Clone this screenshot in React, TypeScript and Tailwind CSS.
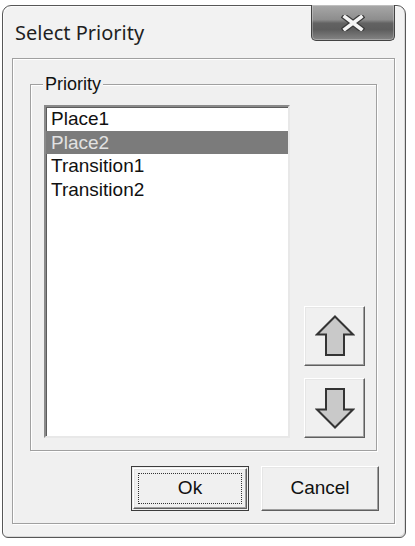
import { useState } from 'react';

const ITEMS = ['Place1', 'Place2', 'Transition1', 'Transition2'];

// Classic raised 3D bevel used by the push buttons
const raised =
  'border-t border-l border-t-white border-l-white border-b border-r border-b-[#5f5f5f] border-r-[#5f5f5f] shadow-[inset_-1px_-1px_0_#a0a0a0,inset_1px_1px_0_#e6e6e6]';

function CloseGlyph() {
  return (
    <svg width="24" height="16" viewBox="0 0 24 16">
      <path d="M4 2 L20 14 M20 2 L4 14" stroke="#3a3a3a" strokeWidth="6" strokeLinecap="square" fill="none" />
      <path d="M4 2 L20 14 M20 2 L4 14" stroke="#f4f4f4" strokeWidth="3.6" strokeLinecap="square" fill="none" />
    </svg>
  );
}

function Arrow({ down }: { down?: boolean }) {
  return (
    <svg width="40" height="42" viewBox="0 0 40 42" className={down ? 'rotate-180' : ''}>
      <polygon
        points="20,1.5 38,19.5 29,19.5 29,40 11,40 11,19.5 2,19.5"
        fill="#c9c9c9"
        stroke="#343434"
        strokeWidth="2"
        strokeLinejoin="miter"
      />
    </svg>
  );
}

export default function App() {
  const [selected, setSelected] = useState(1);

  return (
    <div className="w-[415px] h-[546px] bg-white pt-[5px] pl-[2px] font-['Liberation_Sans',Arial,sans-serif]">
      {/* Dialog window */}
      <div className="w-[404px] h-[533px] flex flex-col border border-[#575757] rounded-t-[9px] rounded-b-[6px] bg-[#f2f2f2] pl-[9px] pr-[10px] pb-[13px] shadow-[inset_1px_1px_0_#fbfbfb,inset_-1px_-1px_0_#d8d8d8]">
        {/* Title bar */}
        <div className="h-[52px] flex items-start justify-between">
          <span className="mt-[12px] ml-[3px] text-[20px] text-[#1f1f1f] font-['Noto_Sans',sans-serif]">
            Select Priority
          </span>
          <button className="-mt-[1px] w-[84px] h-[36px] flex items-center justify-center border border-[#434343] border-t-0 rounded-b-[5px] bg-[linear-gradient(to_bottom,#a8a8a8_0%,#8d8d8d_42%,#626262_52%,#5d5d5d_70%,#858585_100%)] shadow-[inset_0_0_0_1px_rgba(255,255,255,0.28)]">
            <CloseGlyph />
          </button>
        </div>

        {/* Client frame */}
        <div className="flex-1 flex flex-col border border-[#a0a0a0] shadow-[inset_1px_1px_0_#fff,1px_1px_0_#fff] bg-[#f0f0f0] px-[17px] pt-[25px] pb-[12px]">
          {/* Priority group box */}
          <div className="relative h-[367px] flex border border-[#a0a0a0] shadow-[inset_1px_1px_0_#fff,1px_1px_0_#fff] pl-[13px] pr-[11px] pt-[20px] pb-[12px] gap-[14px]">
            <span className="absolute -top-[12px] left-[12px] bg-[#f0f0f0] px-[2px] text-[18px] leading-[22px] text-[#111]">
              Priority
            </span>

            {/* List box */}
            <div className="w-[246px] h-[333px] bg-white border-t-2 border-l-2 border-b-2 border-r-2 border-t-[#8a8a8a] border-l-[#8a8a8a] border-b-[#e8e8e8] border-r-[#e8e8e8] shadow-[inset_1px_1px_0_#5c5c5c]">
              {ITEMS.map((item, i) => (
                <div
                  key={item}
                  onClick={() => setSelected(i)}
                  className={`h-[23.5px] leading-[23.5px] pl-[5px] text-[19px] ${
                    i === selected ? 'bg-[#7b7b7b] text-[#e2e2e2]' : 'text-[#111]'
                  }`}
                >
                  {item}
                </div>
              ))}
            </div>

            {/* Move up / down */}
            <div className="flex flex-col justify-end gap-[12px]">
              <button className={`w-[61px] h-[60px] flex items-center justify-center bg-[#f0f0f0] ${raised}`}>
                <Arrow />
              </button>
              <button className={`w-[61px] h-[60px] flex items-center justify-center bg-[#f0f0f0] ${raised}`}>
                <Arrow down />
              </button>
            </div>
          </div>

          {/* Dialog buttons */}
          <div className="mt-[15px] -mr-[2px] flex justify-end gap-[12px]">
            <button className="w-[118px] h-[45px] border border-[#3c3c3c] bg-[#f0f0f0] p-[1px]">
              <div className={`w-full h-full p-[4px] ${raised}`}>
                <div className="w-full h-full border border-dotted border-[#333] flex items-center justify-center text-[19px] text-[#111]">
                  Ok
                </div>
              </div>
            </button>
            <button
              className={`w-[118px] h-[45px] flex items-center justify-center bg-[#f0f0f0] text-[19px] text-[#111] ${raised}`}
            >
              Cancel
            </button>
          </div>
        </div>
      </div>
    </div>
  );
}
